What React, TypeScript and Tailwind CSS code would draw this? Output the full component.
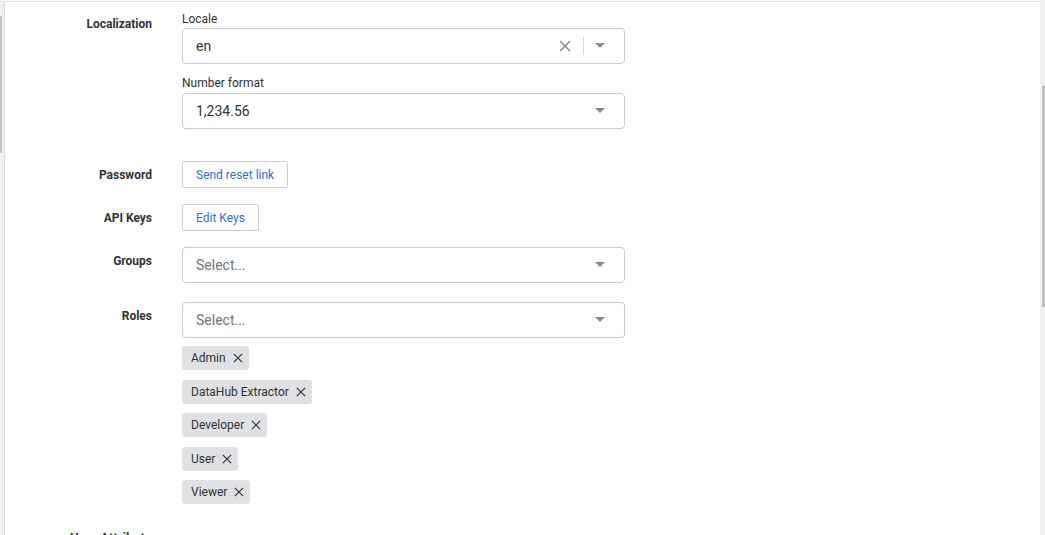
import React from "react";

const Caret = () => (
  <svg width="10" height="6" viewBox="0 0 10 6" className="block">
    <path d="M0 0 L10 0 L5 5 Z" fill="#8a8a8a" />
  </svg>
);

const ClearX = ({ size = 12, color = "#8a8a8a", sw = 1.4 }: { size?: number; color?: string; sw?: number }) => (
  <svg width={size} height={size} viewBox="0 0 12 12" className="block">
    <path d="M1 1 L11 11 M11 1 L1 11" stroke={color} strokeWidth={sw} fill="none" />
  </svg>
);

function SelectBox({ value, placeholder, clear }: { value?: string; placeholder?: string; clear?: boolean }) {
  return (
    <div className="flex h-[36px] w-[443px] items-center rounded-[4px] border border-[#c8cacf] bg-white pl-[13px] pr-[19px]">
      <div className={"flex-1 text-[14px] " + (value ? "text-[#333]" : "text-[#757575]")}>{value ?? placeholder}</div>
      {clear && (
        <div className="flex items-center">
          <ClearX size={12} color="#8c8c8c" sw={1.5} />
          <div className="ml-[12px] mr-[11px] h-[18px] w-px bg-[#d7d7d7]" />
        </div>
      )}
      <Caret />
    </div>
  );
}

function Tag({ label }: { label: string }) {
  return (
    <div className="flex h-[24px] items-center self-start rounded-[3px] bg-[#dfe1e5] pl-[9px] pr-[6px] text-[12px] text-[#333]">
      <span>{label}</span>
      <span className="ml-[7px]">
        <ClearX size={10} color="#333" sw={1.4} />
      </span>
    </div>
  );
}

function Btn({ label }: { label: string }) {
  return (
    <button className="h-[27px] rounded-[2px] border border-[#cfcfcf] bg-white px-[13px] text-[12px] leading-[14px] text-[#2f6fe0]">
      {label}
    </button>
  );
}

export default function App() {
  return (
    <div
      className="flex h-[535px] w-[1045px] overflow-hidden bg-white"
      style={{ fontFamily: "Roboto, 'Liberation Sans', sans-serif" }}
    >
      <div className="relative w-[4px] shrink-0 bg-[#f1f1f3]">
        <div className="absolute left-0 top-[16px] h-[137px] w-[2px] bg-[#c2c2c4]" />
      </div>
      <div className="mt-[1px] flex min-w-0 flex-1 flex-col border-l border-t border-l-[#d8dce4] border-t-[#e0e0e0]">
        <div className="grid grid-cols-[147px_443px] gap-x-[30px] pt-[8px]">
          {/* Localization */}
          <div className="pt-[5px] text-right text-[12px] font-bold text-[#333]">Localization</div>
          <div className="flex flex-col">
            <div className="mt-[1px] text-[12px] leading-[16px] text-[#333]">Locale</div>
            <div className="mt-[1px]">
              <SelectBox value="en" clear />
            </div>
            <div className="mt-[11px] text-[12px] leading-[16px] text-[#333]">Number format</div>
            <div className="mt-[2px]">
              <SelectBox value="1,234.56" />
            </div>
          </div>

          {/* Password */}
          <div className="mt-[32px] flex items-center justify-end text-[12px] font-bold text-[#333]">Password</div>
          <div className="mt-[32px]">
            <Btn label="Send reset link" />
          </div>

          {/* API Keys */}
          <div className="mt-[16px] flex items-center justify-end text-[12px] font-bold text-[#333]">API Keys</div>
          <div className="mt-[16px]">
            <Btn label="Edit Keys" />
          </div>

          {/* Groups */}
          <div className="mt-[16px] pt-[5px] text-right text-[12px] font-bold text-[#333]">Groups</div>
          <div className="mt-[16px]">
            <SelectBox placeholder="Select..." />
          </div>

          {/* Roles */}
          <div className="mt-[19px] pt-[5px] text-right text-[12px] font-bold text-[#333]">Roles</div>
          <div className="mt-[19px] flex flex-col gap-[9.5px]">
            <div className="mb-[-1.5px]">
              <SelectBox placeholder="Select..." />
            </div>
            <Tag label="Admin" />
            <Tag label="DataHub Extractor" />
            <Tag label="Developer" />
            <Tag label="User" />
            <Tag label="Viewer" />
          </div>
        </div>
        <div className="mt-[24px] pl-[65px] text-[13px] font-bold text-[#333]">User Attributes</div>
      </div>
      <div className="relative w-[5px] shrink-0 bg-[#f0f0f0]">
        <div className="absolute right-0 top-[86px] h-[221px] w-[3px] bg-[#c1c1c1]" />
      </div>
    </div>
  );
}
